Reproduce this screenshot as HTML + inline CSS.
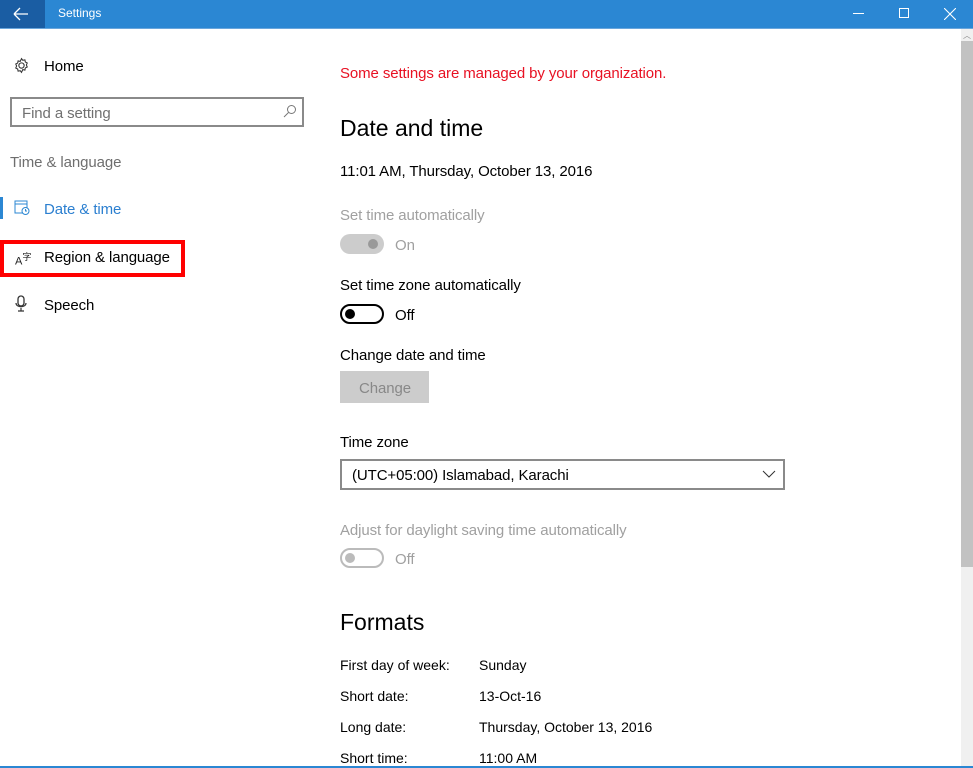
<!DOCTYPE html>
<html><head><style>
*{margin:0;padding:0;box-sizing:border-box}
body{width:973px;height:768px;position:relative;overflow:hidden;background:#fff;font-family:"Segoe UI","Liberation Sans",sans-serif;color:#000}
.a{position:absolute;white-space:nowrap}
.x{margin-top:2px}
.t{font-size:15px;letter-spacing:-0.1px}
.g{color:#a0a0a0}
</style></head><body>
<div class="a" style="left:0;top:0;width:973px;height:28px;background:#2b87d3"></div>
<div class="a" style="left:0;top:0;width:45px;height:28px;background:#1a5da3"></div>
<svg class="a" style="left:13px;top:7px" width="16" height="14"><path d="M1 7H15M1 7L7 1M1 7L7 13" stroke="#fff" stroke-width="1.3" fill="none"/></svg>
<div class="a" style="left:58px;top:6px;font-size:12px;color:#fff">Settings</div>
<div class="a" style="left:853px;top:13px;width:11px;height:1px;background:#fff"></div>
<div class="a" style="left:899px;top:8px;width:10px;height:10px;border:1px solid #fff"></div>
<svg class="a" style="left:944px;top:8px" width="12" height="12"><path d="M0 0L12 12M12 0L0 12" stroke="#fff" stroke-width="1.1"/></svg>
<div class="a" style="left:0;top:28px;width:973px;height:1px;background:#6aa6dc"></div>
<div class="a" style="left:0;top:766px;width:973px;height:2px;background:#2b87d3"></div>
<div class="a" style="left:961px;top:29px;width:12px;height:737px;background:#f0f0f0"></div>
<div class="a" style="left:961px;top:41px;width:12px;height:526px;background:#c2c2c2"></div>
<div class="a" style="left:963px;top:30px;font-size:8px;color:#888">︿</div>
<svg class="a" style="left:13px;top:57px" width="17" height="17" viewBox="0 0 16 16"><circle cx="8" cy="8" r="2.5" fill="none" stroke="#333"/><path d="M8 1.5l1.2 1.6 2-.4.4 2 1.8.9-.8 1.9.8 1.9-1.8.9-.4 2-2-.4L8 14.5l-1.2-1.6-2 .4-.4-2-1.8-.9.8-1.9-.8-1.9 1.8-.9.4-2 2 .4z" fill="none" stroke="#333" stroke-width="1"/></svg>
<div class="a t x" style="left:44px;top:56px">Home</div>
<div class="a" style="left:10px;top:97px;width:294px;height:30px;border:2px solid #8a8a8a"></div>
<div class="a t x" style="left:22px;top:103px;color:#707070">Find a setting</div>
<svg class="a" style="left:283px;top:104px" width="14" height="14"><circle cx="8.5" cy="5.5" r="4" fill="none" stroke="#777"/><path d="M5.5 8.5L1 13" stroke="#777"/></svg>
<div class="a t x" style="left:10px;top:152px;color:#6e6e6e">Time &amp; language</div>
<div class="a" style="left:0;top:197px;width:3px;height:22px;background:#2b87d3"></div>
<svg class="a" style="left:14px;top:199px" width="16" height="17"><rect x="1" y="2" width="12" height="12" fill="none" stroke="#2b87d3"/><path d="M1 5H13" stroke="#2b87d3"/><circle cx="11.5" cy="12" r="3.5" fill="#fff" stroke="#2b87d3"/><path d="M11.5 10v2h1.5" stroke="#2b87d3" fill="none"/></svg>
<div class="a t x" style="left:44px;top:199px;color:#2b7fd0">Date &amp; time</div>
<div class="a" style="left:0;top:240px;width:185px;height:37px;border:4px solid #f00"></div>
<div class="a" style="left:15px;top:250px;font-size:11px;color:#222">A<sup style="font-size:9px">字</sup></div>
<div class="a t x" style="left:44px;top:247px">Region &amp; language</div>
<svg class="a" style="left:15px;top:295px" width="12" height="18"><rect x="3" y="1" width="6" height="10" rx="3" fill="none" stroke="#333" stroke-width="1.3"/><path d="M1 8c0 5 10 5 10 0M6 13v3M3 16h6" stroke="#333" fill="none" stroke-width="1.2"/></svg>
<div class="a t x" style="left:44px;top:295px">Speech</div>
<div class="a x" style="left:340px;top:63px;font-size:15px;letter-spacing:-0.1px;color:#e81123">Some settings are managed by your organization.</div>
<div class="a x" style="left:340px;top:113px;font-size:23px">Date and time</div>
<div class="a t x" style="left:340px;top:161px">11:01 AM, Thursday, October 13, 2016</div>
<div class="a t g x" style="left:340px;top:205px">Set time automatically</div>
<div class="a" style="left:340px;top:234px;width:44px;height:20px;border-radius:10px;background:#ccc"></div>
<div class="a" style="left:368px;top:239px;width:10px;height:10px;border-radius:50%;background:#999"></div>
<div class="a t g x" style="left:395px;top:235px">On</div>
<div class="a t x" style="left:340px;top:275px">Set time zone automatically</div>
<div class="a" style="left:340px;top:304px;width:44px;height:20px;border-radius:10px;border:2px solid #000"></div>
<div class="a" style="left:345px;top:309px;width:10px;height:10px;border-radius:50%;background:#000"></div>
<div class="a t x" style="left:395px;top:305px">Off</div>
<div class="a t x" style="left:340px;top:345px">Change date and time</div>
<div class="a" style="left:340px;top:371px;width:89px;height:32px;background:#ccc"></div>
<div class="a t x" style="left:359px;top:378px;color:#888">Change</div>
<div class="a t x" style="left:340px;top:432px">Time zone</div>
<div class="a" style="left:340px;top:459px;width:445px;height:31px;border:2px solid #8a8a8a"></div>
<div class="a t x" style="left:352px;top:465px">(UTC+05:00) Islamabad, Karachi</div>
<svg class="a" style="left:762px;top:470px" width="14" height="8"><path d="M1 1L7 7L13 1" stroke="#333" fill="none"/></svg>
<div class="a t g x" style="left:340px;top:520px">Adjust for daylight saving time automatically</div>
<div class="a" style="left:340px;top:548px;width:44px;height:20px;border-radius:10px;border:2px solid #bbb"></div>
<div class="a" style="left:345px;top:553px;width:10px;height:10px;border-radius:50%;background:#bbb"></div>
<div class="a t g x" style="left:395px;top:549px">Off</div>
<div class="a x" style="left:340px;top:607px;font-size:23px">Formats</div>
<div class="a x" style="left:340px;top:655px;font-size:14px">First day of week:</div>
<div class="a x" style="left:479px;top:655px;font-size:14px">Sunday</div>
<div class="a x" style="left:340px;top:686px;font-size:14px">Short date:</div>
<div class="a x" style="left:479px;top:686px;font-size:14px">13-Oct-16</div>
<div class="a x" style="left:340px;top:717px;font-size:14px">Long date:</div>
<div class="a x" style="left:479px;top:717px;font-size:14px">Thursday, October 13, 2016</div>
<div class="a x" style="left:340px;top:748px;font-size:14px">Short time:</div>
<div class="a x" style="left:479px;top:748px;font-size:14px">11:00 AM</div>
</body></html>
